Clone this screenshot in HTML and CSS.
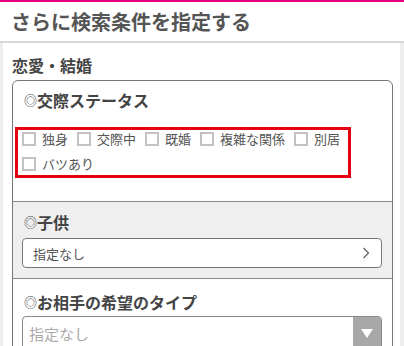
FILE: index.html
```html
<!DOCTYPE html>
<html lang="ja">
<head>
  <meta charset="UTF-8">
  <meta name="viewport" content="width=device-width, initial-scale=1.0">
  <title>さらに検索条件を指定する</title>
  <link rel="stylesheet" href="styles.css">
</head>
<body>
  <header class="page-head">
    <h1 class="page-title">さらに検索条件を指定する</h1>
  </header>

  <div class="panel">
    <h2 class="group-title">恋愛・結婚</h2>

    <div class="cond-box">
      <section class="cond">
        <h3 class="cond-title"><span class="mark">◎</span>交際ステータス</h3>
        <div class="checks">
          <label class="check"><span class="box"></span>独身</label>
          <label class="check"><span class="box"></span>交際中</label>
          <label class="check"><span class="box"></span>既婚</label>
          <label class="check"><span class="box"></span>複雑な関係</label>
          <label class="check"><span class="box"></span>別居</label>
          <label class="check"><span class="box"></span>バツあり</label>
        </div>
      </section>

      <section class="cond cond-grey">
        <h3 class="cond-title"><span class="mark">◎</span>子供</h3>
        <div class="link-select">
          <span>指定なし</span>
          <svg width="8" height="12" viewBox="0 0 8 12"><polyline points="1.5,1 6.5,6 1.5,11" fill="none" stroke="#666" stroke-width="1.3"/></svg>
        </div>
      </section>

      <section class="cond cond-last">
        <h3 class="cond-title"><span class="mark">◎</span>お相手の希望のタイプ</h3>
        <div class="drop-select">
          <span class="placeholder">指定なし</span>
          <span class="drop-btn">
            <svg width="12" height="9" viewBox="0 0 12 9"><polygon points="0,0 12,0 6,9" fill="#fff"/></svg>
          </span>
        </div>
      </section>
    </div>
  </div>
</body>
</html>
```

FILE: styles.css
```css
html, body, div, h1, h2, h3 {
  margin: 0;
  padding: 0;
}

body {
  background-color: #eeeeee;
  color: #555;
  font-family: "Noto Sans CJK JP", "Noto Sans", sans-serif;
  font-size: 13px;
}

.page-head {
  background: #fff;
  border-top: 2px solid #e4007f;
  border-bottom: 2px solid #d6d6d6;
}

.page-title {
  font-size: 20px;
  font-weight: bold;
  line-height: 39px;
  padding-left: 11px;
  color: #555;
}

.panel {
  background: #fff;
  margin: 0 4px 0 3px;
  padding: 12px 7px 20px 9px;
}

.group-title {
  font-size: 16px;
  font-weight: bold;
  line-height: 20px;
  color: #444;
  margin-bottom: 5px;
}

.cond-box {
  border: 1px solid #777;
  border-radius: 6px;
  overflow: hidden;
}

.cond {
  padding: 9px 10px 23px 9px;
}

.cond + .cond {
  border-top: 1px solid #888;
}

.cond-grey {
  background: #efefef;
  padding-top: 10px;
  padding-bottom: 10px;
}

.cond-last {
  padding-top: 13px;
  padding-bottom: 20px;
}

.cond-title {
  font-size: 16px;
  font-weight: bold;
  line-height: 20px;
  color: #444;
  padding-left: 2px;
  display: flex;
  align-items: center;
}

.mark {
  font-size: 13px;
  font-weight: normal;
  color: #444;
}

.checks {
  margin: 17px 31px 0 -7px;
  border: 3px solid #e60012;
  padding: 0 0 3px 4px;
  display: flex;
  flex-wrap: wrap;
  column-gap: 9px;
  row-gap: 8px;
}

.check {
  display: flex;
  align-items: center;
  height: 17px;
  font-size: 13px;
  color: #555;
}

.box {
  width: 14px;
  height: 14px;
  box-sizing: border-box;
  border: 2px solid #c2c2c2;
  background: #fff;
  margin-right: 6px;
}

.link-select {
  margin-top: 6px;
  height: 30px;
  box-sizing: border-box;
  border: 1px solid #777;
  border-radius: 4px;
  background: #fff;
  display: flex;
  align-items: center;
  justify-content: space-between;
  padding: 0 11px 0 10px;
  font-size: 13px;
  color: #555;
}

.drop-select {
  margin-top: 4px;
  height: 34px;
  box-sizing: border-box;
  border: 1px solid #888;
  border-radius: 4px;
  background: #fff;
  display: flex;
  align-items: center;
  justify-content: space-between;
  padding-left: 6px;
  overflow: hidden;
}

.placeholder {
  font-size: 15px;
  color: #aaa;
}

.drop-btn {
  width: 28px;
  height: 100%;
  background: #a8a8a8;
  display: flex;
  align-items: center;
  justify-content: center;
}
```
